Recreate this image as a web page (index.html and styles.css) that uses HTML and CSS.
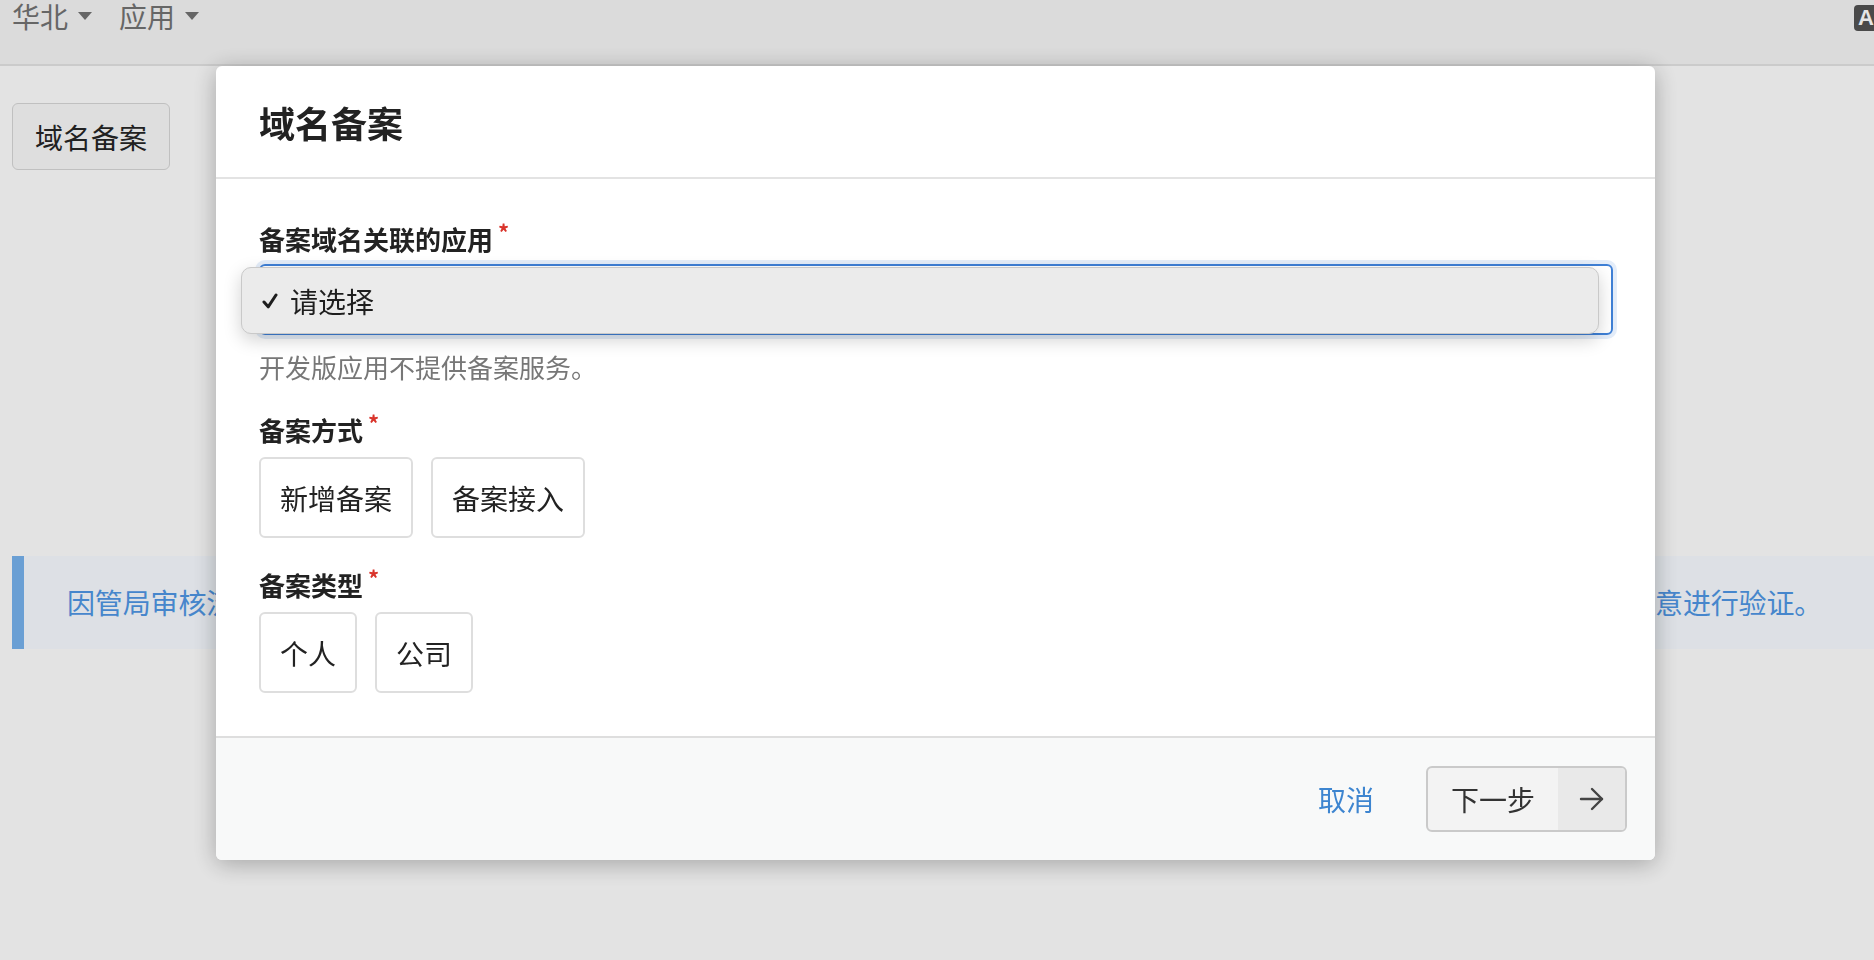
FILE: index.html
```html
<!DOCTYPE html>
<html lang="zh-CN">
<head>
    <meta charset="UTF-8">
    <meta name="viewport" content="width=device-width, initial-scale=1.0">
    <title>域名备案</title>
    <link rel="stylesheet" href="styles.css">
</head>
<body>

<div class="topbar">
    <div class="nav">
        <span class="nav-item">华北<i class="caret"></i></span>
        <span class="nav-item">应用<i class="caret"></i></span>
    </div>
    <div class="avatar">A</div>
</div>

<div class="main">
    <button class="page-btn">域名备案</button>
    <div class="notice">因管局审核流程调整，备案期间管局可能会通过短信或电话联系备案主体负责人本人核实备案信息，请保持联系方式畅通并及时留意进行验证。</div>
</div>

<div class="backdrop">
    <div class="modal">
        <div class="modal-header">域名备案</div>

        <div class="modal-body">
            <div class="field-label">备案域名关联的应用<span class="req">*</span></div>
            <div class="select">
                <div class="select-menu">
                    <svg class="check" width="16" height="16" viewBox="0 0 16 16" fill="none" stroke="#1e1e1e" stroke-width="3" stroke-linecap="round" stroke-linejoin="round">
                        <path d="M2 9l4.2 4.8L14 2"/>
                    </svg>请选择
                </div>
            </div>
            <div class="help">开发版应用不提供备案服务。</div>

            <div class="field-label gap">备案方式<span class="req">*</span></div>
            <div class="options">
                <button class="option">新增备案</button>
                <button class="option">备案接入</button>
            </div>

            <div class="field-label gap">备案类型<span class="req">*</span></div>
            <div class="options">
                <button class="option">个人</button>
                <button class="option">公司</button>
            </div>
        </div>

        <div class="modal-footer">
            <a class="cancel" href="#">取消</a>
            <button class="next">
                <span class="next-text">下一步</span>
                <span class="next-icon">
                    <svg width="26" height="24" viewBox="0 0 26 24" fill="none" stroke="#444" stroke-width="2.4" stroke-linecap="round" stroke-linejoin="round">
                        <path d="M2 12h21"/>
                        <path d="M13 2l10 10-10 10"/>
                    </svg>
                </span>
            </button>
        </div>
    </div>
</div>

</body>
</html>
```

FILE: styles.css
```css
body {
    font-family: "Noto Sans CJK SC", "Noto Sans", sans-serif;
    margin: 0;
    background-color: #fdfdfd;
    color: #222;
    overflow: hidden;
    height: 960px;
}

.topbar {
    height: 64px;
    background-color: #f4f4f4;
    border-bottom: 2px solid #e2e2e2;
    display: flex;
    justify-content: space-between;
    align-items: flex-start;
}

.nav {
    display: flex;
    gap: 27px;
    padding-left: 12px;
}

.nav-item {
    font-size: 28px;
    line-height: 32px;
    color: #727272;
    display: flex;
    align-items: center;
}

.caret {
    display: inline-block;
    width: 0;
    height: 0;
    border-left: 7px solid transparent;
    border-right: 7px solid transparent;
    border-top: 8px solid #727272;
    margin-left: 10px;
}

.avatar {
    margin-top: 5px;
    margin-right: -14px;
    width: 30px;
    height: 26px;
    border-radius: 4px;
    background-color: #535353;
    color: #fff;
    font-family: "Liberation Sans", sans-serif;
    font-weight: bold;
    font-size: 22px;
    line-height: 26px;
    padding-left: 4px;
}

.main {
    padding: 37px 0 0 12px;
}

.page-btn {
    font-family: inherit;
    font-size: 28px;
    height: 67px;
    padding: 0 22px;
    background-color: #f8f8f8;
    border: 1px solid #d6d6d6;
    border-radius: 6px;
    color: #252525;
}

.notice {
    margin-top: 386px;
    height: 93px;
    box-sizing: border-box;
    border-left: 12px solid #76b1ec;
    background-color: #f6faff;
    color: #4f96e4;
    font-size: 28px;
    letter-spacing: -0.14px;
    line-height: 93px;
    padding-left: 43px;
    white-space: nowrap;
}

.backdrop {
    position: fixed;
    inset: 0;
    background-color: rgba(0, 0, 0, 0.1);
}

.modal {
    position: absolute;
    left: 216px;
    top: 66px;
    width: 1439px;
    background-color: #fff;
    border-radius: 6px;
    box-shadow: 0 4px 24px rgba(0, 0, 0, 0.28);
    overflow: hidden;
}

.modal-header {
    height: 111px;
    display: flex;
    align-items: center;
    padding-left: 43px;
    font-size: 36px;
    font-weight: bold;
    border-bottom: 2px solid #e3e3e3;
}

.modal-body {
    padding: 44px 42px 43px 43px;
}

.field-label {
    font-size: 26px;
    font-weight: bold;
    line-height: 32px;
    color: #222;
}

.field-label.gap {
    margin-top: 31px;
}

.req {
    color: #d9342b;
    font-size: 22px;
    vertical-align: top;
    position: relative;
    top: -8px;
    margin-left: 5px;
}

.select {
    margin-top: 9px;
    height: 71px;
    box-sizing: border-box;
    border: 2px solid #3f80d6;
    border-radius: 6px;
    box-shadow: 0 0 0 4px rgba(63, 128, 214, 0.14);
    position: relative;
}

.select-menu {
    position: absolute;
    left: -20px;
    top: 1px;
    right: 12px;
    height: 67px;
    box-sizing: border-box;
    background-color: #ebebeb;
    border: 1px solid #c9c9c9;
    border-radius: 10px;
    box-shadow: 0 6px 18px rgba(0, 0, 0, 0.18);
    display: flex;
    align-items: center;
    padding-left: 20px;
    font-size: 28px;
    color: #1e1e1e;
}

.check {
    margin-right: 12px;
}

.help {
    margin-top: 16px;
    font-size: 26px;
    line-height: 32px;
    color: #777;
}

.options {
    display: flex;
    gap: 18px;
    margin-top: 11px;
}

.option {
    font-family: inherit;
    font-size: 28px;
    color: #222;
    height: 81px;
    padding: 0 19px;
    background-color: #fff;
    border: 2px solid #dedede;
    border-radius: 6px;
}

.modal-footer {
    height: 122px;
    background-color: #f8f9f9;
    border-top: 2px solid #dedede;
    display: flex;
    align-items: center;
    justify-content: flex-end;
    padding-right: 28px;
}

.cancel {
    font-size: 28px;
    color: #3d85d0;
    text-decoration: none;
    margin-right: 52px;
}

.next {
    font-family: inherit;
    display: flex;
    height: 66px;
    padding: 0;
    border: 2px solid #cacaca;
    border-radius: 6px;
    overflow: hidden;
    background-color: #f3f3f3;
}

.next-text {
    font-size: 28px;
    color: #333;
    width: 130px;
    height: 100%;
    display: flex;
    align-items: center;
    justify-content: center;
}

.next-icon {
    width: 67px;
    height: 100%;
    background-color: #e9e9e9;
    display: flex;
    align-items: center;
    justify-content: center;
}
```
